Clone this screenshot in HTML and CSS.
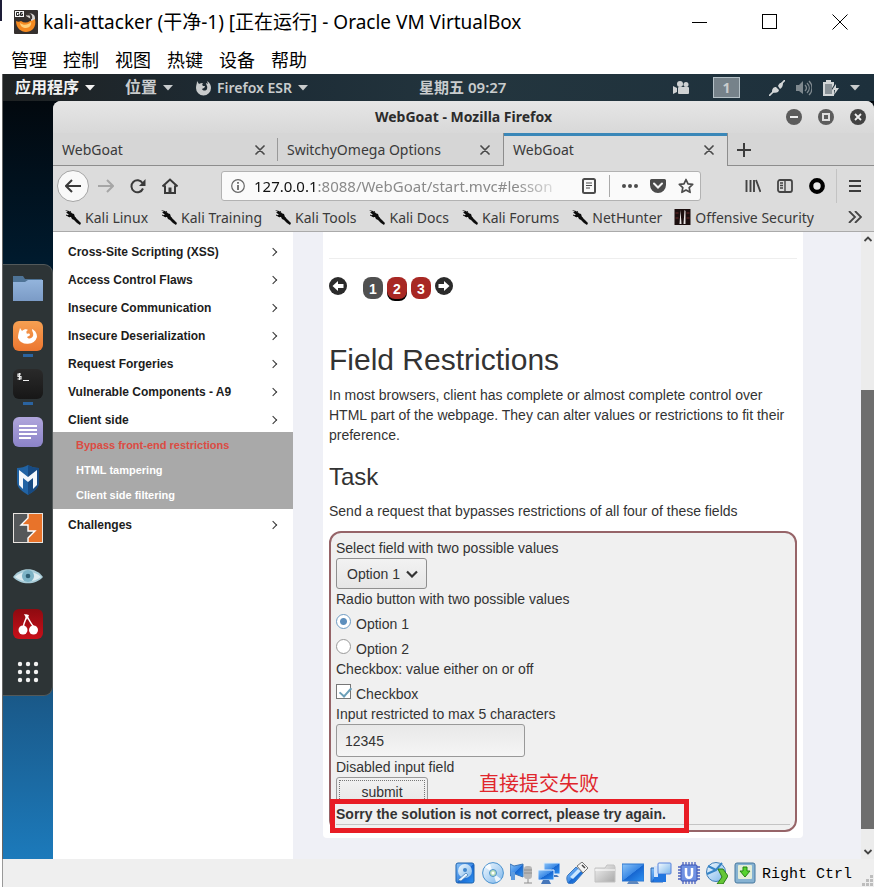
FILE: index.html
```html
<!DOCTYPE html>
<html lang="zh-CN">
<head>
<meta charset="utf-8">
<meta name="viewport" content="width=device-width, initial-scale=1">
<title>kali-attacker - Oracle VM VirtualBox</title>
<link rel="stylesheet" href="styles.css">
</head>
<body>
<svg class="defs" aria-hidden="true">
  <defs>
    <linearGradient id="gBlue" x1="0" y1="0" x2="1" y2="1"><stop offset="0" stop-color="#8cc4f8"/><stop offset=".5" stop-color="#3c8ae6"/><stop offset=".52" stop-color="#1766d0"/><stop offset="1" stop-color="#2f93f2"/></linearGradient>
    <linearGradient id="gPale" x1="0" y1="0" x2="1" y2="1"><stop offset="0" stop-color="#f4fbff"/><stop offset="1" stop-color="#7ab4ea"/></linearGradient>
    <linearGradient id="gGrey" x1="0" y1="0" x2="1" y2="1"><stop offset="0" stop-color="#f2f2f2"/><stop offset="1" stop-color="#a8a8a8"/></linearGradient>
    <linearGradient id="gFolder" x1="0" y1="0" x2="0" y2="1"><stop offset="0" stop-color="#93b4dc"/><stop offset="1" stop-color="#7b9bc6"/></linearGradient>
    <linearGradient id="gFox" x1="0" y1="0" x2="0" y2="1"><stop offset="0" stop-color="#f6a052"/><stop offset="1" stop-color="#ec7630"/></linearGradient>
    <linearGradient id="gTerm" x1="0" y1="0" x2="0" y2="1"><stop offset="0" stop-color="#2a2a2a"/><stop offset="1" stop-color="#171717"/></linearGradient>
    <linearGradient id="gNote" x1="0" y1="0" x2="0" y2="1"><stop offset="0" stop-color="#b0a6dc"/><stop offset="1" stop-color="#8b83c8"/></linearGradient>
    <linearGradient id="gCherry" x1="0" y1="0" x2="0" y2="1"><stop offset="0" stop-color="#8e0a10"/><stop offset="1" stop-color="#c8101a"/></linearGradient>
    <symbol id="dragon" viewBox="0 0 17 16"><path d="M1 1l4 1 2 2 3 1 1 3 3 3 3 3-1 2-3-2-3-3-2-1-1-2-2 0-2-2 2 0-3-3 2 0z" fill="#0c0c0c"/><path d="M3 3l3 3M2 6l4 2M6 2l2 4M10 9l2 0" stroke="#0c0c0c" fill="none"/></symbol>
    <symbol id="closeX" viewBox="0 0 10 10"><path d="M1 1l8 8M9 1l-8 8" fill="none" stroke="#4a4a4a" stroke-width="1.7" stroke-linecap="round"/></symbol>
    <symbol id="caret" viewBox="0 0 10 6"><path d="M0 0h10L5 5.500z" fill="currentColor"/></symbol>
  </defs>
</svg>

<header class="host-title">
  <svg class="app-icon" viewBox="0 0 24 24"><rect width="24" height="24" rx="1" fill="#35302e"/><path d="M12 6c2-4 9-3 9 2v7h-4V9z" fill="#d9d5d2"/><path d="M13 5c2-2 5 0 4 4" fill="none" stroke="#3d3734" stroke-width="2"/><path d="M2 11c2 1 3 1 5 0 3 2 6 2 9 0 2 0 3-1 5-2 2 9-4 13-9 13S2 18 2 11z" fill="#f58a20"/><path d="M6 13c4 3 8 2 11-1 1 3-2 6-5 6s-6-2-6-5z" fill="#ffd07a"/><rect x="1" y="1" width="9" height="6" fill="#f8f8f8"/><path d="M5 2.500H2.500v3H5V4H4M8.500 2.500H6.500v3h2V4h-2" fill="none" stroke="#222" stroke-width="1"/></svg>
  <h1>kali-attacker (干净-1) [正在运行] - Oracle VM VirtualBox</h1>
  <div class="host-buttons">
    <button aria-label="最小化"><svg viewBox="0 0 16 16"><path d="M0 8.500h15" stroke="#000"/></svg></button>
    <button aria-label="最大化"><svg viewBox="0 0 16 16"><rect x=".5" y=".5" width="14" height="14" fill="none" stroke="#000"/></svg></button>
    <button aria-label="关闭"><svg viewBox="0 0 16 16"><path d="M.5.5l15 15M15.500.5l-15 15" stroke="#000"/></svg></button>
  </div>
</header>
<nav class="host-menu">
  <button>管理</button><button>控制</button><button>视图</button><button>热键</button><button>设备</button><button>帮助</button>
</nav>

<div class="screen">
  <div class="topbar">
    <button class="top-item strong">应用程序<svg class="caret"><use href="#caret"/></svg></button>
    <button class="top-item">位置<svg class="caret"><use href="#caret"/></svg></button>
    <button class="top-item latin"><svg class="fox" viewBox="0 0 16 16"><path d="M2 1l2 3c1-1 3-1 4-1-1 1-1 2 0 3l2 0c0 2-2 2-3 3 1 2 4 2 5 0 1-3-1-4-1-6l2 1-1-3c3 2 4 4 4 7a7.500 7.500 0 0 1-15 0c0-3 1-4 1-7z" fill="#c9cccd"/></svg>Firefox ESR<svg class="caret"><use href="#caret"/></svg></button>
    <span class="grow-a"></span>
    <time class="clock">星期五 09:27</time>
    <span class="grow-b"></span>
    <svg class="camera" viewBox="0 0 17 14"><circle cx="7" cy="3" r="3" fill="#cfd2d3"/><circle cx="13" cy="3.500" r="2.500" fill="#cfd2d3"/><rect x="5" y="6" width="11" height="7" rx="1" fill="#cfd2d3"/><path d="M0 5l4 2v4l-4 2z" fill="#cfd2d3"/></svg>
    <span class="workspace">1</span>
    <div class="tray">
      <svg width="16" height="16" viewBox="0 0 16 16"><path d="M0 16l5-5M11 5l5-5" stroke="#d3d6d7" stroke-width="1.600"/><path d="M3 12c0-4 2-5 4-5l3 3c0 2-3 4-7 2zM9 6c1-3 3-4 5-3 0 3-1 5-3 6z" fill="#d3d6d7"/></svg>
      <svg width="16" height="16" viewBox="0 0 16 16"><path d="M0 5h3l4-4v13L3 11H0z" fill="#7f898f"/><path d="M9 5c2 2 2 4 0 6M11 3c3 3 3 7 0 10M13 1c4 4 4 10 0 14" fill="none" stroke="#7f898f" stroke-width="1.300"/></svg>
      <svg width="16" height="16" viewBox="0 0 16 16"><path d="M3 0h5v2h3v3L8 10h3v6H0V2h3z" fill="#d3d6d7"/><rect x="2" y="4" width="7" height="10" fill="#8a9297"/><path d="M13 4l-4 6h3l-1 5 5-7h-3z" fill="#d3d6d7"/></svg>
      <svg class="caret"><use href="#caret"/></svg>
    </div>
  </div>

  <div class="desktop">
    <aside class="dock-column">
      <div class="dock">
        <svg viewBox="0 0 30 30"><path d="M0 3h10l2 3h17v10H0z" fill="#4e7396"/><path d="M0 9h12l3-2h15v21H0z" fill="url(#gFolder)"/></svg>
        <span class="running"><svg viewBox="0 0 30 30"><rect width="30" height="30" rx="6" fill="url(#gFox)"/><path d="M7 7l2 3c2-2 5-2 6-1-2 1-2 2-1 4 2-1 3 0 3 1s-2 1-3 2c2 3 5 1 6-1 1-3-1-4-1-7 4 2 5 5 5 8a10 9 0 0 1-19 1c0-4 1-6 2-10z" fill="#fff"/></svg></span>
        <span class="running"><svg viewBox="0 0 30 30"><rect width="30" height="30" rx="6" fill="url(#gTerm)"/><path d="M8 5H5v2.500h3V10H4.500M6.500 4v7M10 11.500h6" fill="none" stroke="#eee" stroke-width="1.200"/></svg></span>
        <svg viewBox="0 0 30 30"><rect width="30" height="30" rx="6" fill="url(#gNote)"/><path d="M6 9h18M6 13h18M6 17h18M6 21h12" stroke="#fff" stroke-width="2"/></svg>
        <svg viewBox="0 0 30 30"><path d="M15 0c3 2 7 3 11 3v14c0 6-5 9-11 13C9 26 4 23 4 17V3c4 0 8-1 11-3z" fill="#2163a4"/><path d="M15 0v30c6-4 11-7 11-13V3c-4 0-8-1-11-3z" fill="#174a82"/><path d="M6 5l9 7 9-7v15l-4 4V13l-5 4-5-4v11l-4-4z" fill="#f3f7fb"/></svg>
        <svg viewBox="0 0 30 30"><rect x="1" y="1" width="28" height="28" fill="#55585a"/><path d="M15 1h14v28H15v-5l7-6h-7v-6H8l7-7z" fill="#e8732a"/><path d="M15 1v4l-7 7h7v6h7l-7 7v4" fill="none" stroke="#fff" stroke-width="1.400"/><rect x=".5" y=".5" width="29" height="29" fill="none" stroke="#e8e4e0"/></svg>
        <svg viewBox="0 0 32 30"><path d="M0 16C8 5 24 5 32 16 24 25 8 25 0 16z" fill="#a8ccd8"/><path d="M2 16C9 9 23 9 30 16 23 22 9 22 2 16z" fill="#dcebf0"/><circle cx="16" cy="15" r="6.500" fill="#7db3c6"/><circle cx="16" cy="15" r="2.500" fill="#2f5f74"/></svg>
        <svg viewBox="0 0 30 30"><rect width="30" height="30" rx="6" fill="url(#gCherry)"/><path d="M10 19c1-6 3-9 4-12 2 4 4 8 7 11" fill="none" stroke="#fff" stroke-width="1.500"/><path d="M11 5l5 1-2 5z" fill="#fff"/><circle cx="10" cy="21" r="4.500" fill="#fff"/><circle cx="20.500" cy="21" r="4.500" fill="#fff"/></svg>
        <svg viewBox="0 0 30 30" fill="#f2f2f2"><circle cx="7" cy="7" r="2.200"/><circle cx="15" cy="7" r="2.200"/><circle cx="23" cy="7" r="2.200"/><circle cx="7" cy="15" r="2.200"/><circle cx="15" cy="15" r="2.200"/><circle cx="23" cy="15" r="2.200"/><circle cx="7" cy="23" r="2.200"/><circle cx="15" cy="23" r="2.200"/><circle cx="23" cy="23" r="2.200"/></svg>
      </div>
    </aside>

    <section class="browser">
      <div class="win-title">
        <h2>WebGoat - Mozilla Firefox</h2>
        <div class="win-buttons">
          <button aria-label="Minimize"><svg viewBox="0 0 16 16"><circle cx="8" cy="8" r="8" fill="#5c5c5c"/><path d="M4 8h8" stroke="#eee" stroke-width="2"/></svg></button>
          <button aria-label="Maximize"><svg viewBox="0 0 16 16"><circle cx="8" cy="8" r="8" fill="#5c5c5c"/><rect x="5" y="5" width="6" height="6" fill="none" stroke="#ddd" stroke-width="2"/></svg></button>
          <button aria-label="Close"><svg viewBox="0 0 16 16"><circle cx="8" cy="8" r="8" fill="#424242"/><path d="M5 5l6 6M11 5l-6 6" stroke="#eee" stroke-width="1.800"/></svg></button>
        </div>
      </div>
      <div class="tabs">
        <div class="tab"><span>WebGoat</span><button aria-label="Close tab"><svg><use href="#closeX"/></svg></button></div>
        <div class="tab"><span>SwitchyOmega Options</span><button aria-label="Close tab"><svg><use href="#closeX"/></svg></button></div>
        <div class="tab active"><span>WebGoat</span><button aria-label="Close tab"><svg><use href="#closeX"/></svg></button></div>
        <button class="new-tab" aria-label="New tab"><svg viewBox="0 0 14 14"><path d="M7 0v14M0 7h14" stroke="#3c3c3c" stroke-width="2"/></svg></button>
      </div>
      <div class="navbar">
        <button class="nav-btn back" aria-label="Back"><svg viewBox="0 0 16 16"><path d="M16 8H1.500M7 2L1 8l6 6" fill="none" stroke="#3a3a3a" stroke-width="2"/></svg></button>
        <button class="nav-btn" aria-label="Forward"><svg viewBox="0 0 16 16"><path d="M0 8h14.500M9 2l6 6-6 6" fill="none" stroke="#a6a6a6" stroke-width="2"/></svg></button>
        <button class="nav-btn" aria-label="Reload"><svg viewBox="0 0 16 16"><path d="M13 10.500A6 6 0 1 1 12.500 5" fill="none" stroke="#3a3a3a" stroke-width="2"/><path d="M15.500 1v7H9z" fill="#3a3a3a"/></svg></button>
        <button class="nav-btn" aria-label="Home"><svg viewBox="0 0 16 16"><path d="M.5 8.500L8 1.500l7.500 7M3 7.500V15h10V7.500" fill="none" stroke="#3a3a3a" stroke-width="2"/><path d="M6.500 9.500h3V15h-3z" fill="#3a3a3a"/></svg></button>
        <div class="urlbar">
          <svg class="info" viewBox="0 0 14 14"><circle cx="7" cy="7" r="6.300" fill="none" stroke="#666" stroke-width="1.200"/><path d="M7 6v5M7 3v1.800" stroke="#555" stroke-width="1.600"/></svg>
          <span class="url">127.0.0.1<i>:8088/WebGoat/start.mvc#lesson</i></span>
          <svg class="reader" viewBox="0 0 14 16"><rect x="1" y="1" width="12" height="14" rx="1.500" fill="none" stroke="#4c4c4c" stroke-width="2"/><path d="M4 5h6M4 7.500h6M4 10h4" stroke="#4c4c4c" stroke-width="1.200"/></svg>
          <span class="url-sep"></span>
          <svg class="dots" viewBox="0 0 16 16" fill="#4c4c4c"><circle cx="2" cy="8" r="2"/><circle cx="8" cy="8" r="2"/><circle cx="14" cy="8" r="2"/></svg>
          <svg class="pocket" viewBox="0 0 16 16"><path d="M1.500 1h13A1.500 1.500 0 0 1 16 2.500V7A8 8 0 0 1 0 7V2.500A1.500 1.500 0 0 1 1.500 1z" fill="#4c4c4c"/><path d="M4 5.500l4 4 4-4" fill="none" stroke="#f6f6f6" stroke-width="2" stroke-linecap="round"/></svg>
          <svg class="star" viewBox="0 0 16 16"><path d="M8 1.500l2 4.300 4.700.6-3.500 3.200.9 4.700L8 12l-4.100 2.300.9-4.700L1.300 6.400 6 5.800z" fill="none" stroke="#4c4c4c" stroke-width="1.700" stroke-linejoin="round"/></svg>
        </div>
        <button class="nav-btn" aria-label="Library"><svg viewBox="0 0 16 16"><path d="M1.500 2v12M5.500 2v12M9 2v12M11 2l4.500 12" stroke="#444" stroke-width="1.900"/></svg></button>
        <button class="nav-btn" aria-label="Sidebar"><svg viewBox="0 0 16 16"><rect x="1" y="2" width="14" height="12" rx="2" fill="none" stroke="#444" stroke-width="1.800"/><path d="M8 2v12M3 5h3M3 7.500h3M3 10h3" stroke="#444" stroke-width="1.400"/></svg></button>
        <button class="nav-btn" aria-label="SwitchyOmega"><svg viewBox="0 0 16 16"><circle cx="8" cy="8" r="5.800" fill="#e8e8e8" stroke="#000" stroke-width="4.200"/></svg></button>
        <span class="nav-sep"></span>
        <button class="nav-btn" aria-label="Menu"><svg viewBox="0 0 16 16"><path d="M2 3h12M2 8h12M2 13h12" stroke="#3c3c3c" stroke-width="2"/></svg></button>
      </div>
      <div class="bookmarks">
        <a href="#"><svg><use href="#dragon"/></svg>Kali Linux</a>
        <a href="#"><svg><use href="#dragon"/></svg>Kali Training</a>
        <a href="#"><svg><use href="#dragon"/></svg>Kali Tools</a>
        <a href="#"><svg><use href="#dragon"/></svg>Kali Docs</a>
        <a href="#"><svg><use href="#dragon"/></svg>Kali Forums</a>
        <a href="#"><svg><use href="#dragon"/></svg>NetHunter</a>
        <a href="#"><svg viewBox="0 0 16 16"><rect width="16" height="16" fill="#1c0f0f"/><path d="M6 1l1 14H5zM10 1l1 1v13H9z" fill="#e8e4e4"/><path d="M1 4h3M1 9h3M12 4h3M12 9h3" stroke="#6b2b2b"/></svg>Offensive Security</a>
        <button aria-label="More bookmarks"><svg viewBox="0 0 14 12"><path d="M1 0l6 6-6 6M7 0l6 6-6 6" fill="none" stroke="#444" stroke-width="1.800"/></svg></button>
      </div>

      <div class="page">
        <nav class="lessons">
          <ul>
            <li><a href="#">Cross-Site Scripting (XSS)</a></li>
            <li><a href="#">Access Control Flaws</a></li>
            <li><a href="#">Insecure Communication</a></li>
            <li><a href="#">Insecure Deserialization</a></li>
            <li><a href="#">Request Forgeries</a></li>
            <li><a href="#">Vulnerable Components - A9</a></li>
            <li><a href="#">Client side</a>
              <ul class="sub">
                <li class="current"><a href="#">Bypass front-end restrictions</a></li>
                <li><a href="#">HTML tampering</a></li>
                <li><a href="#">Client side filtering</a></li>
              </ul>
            </li>
            <li><a href="#">Challenges</a></li>
          </ul>
        </nav>
        <main>
          <article class="card">
            <hr class="rule">
            <div class="pager">
              <a href="#" class="arrow prev" aria-label="Previous"><svg viewBox="0 0 18 18"><circle cx="9" cy="9" r="9" fill="#2b2b2b"/><path d="M3.500 9L9 4v3h5.500v4H9v3z" fill="#fff"/></svg></a>
              <a href="#" class="num seen">1</a>
              <a href="#" class="num here">2</a>
              <a href="#" class="num">3</a>
              <a href="#" class="arrow" aria-label="Next"><svg viewBox="0 0 18 18"><circle cx="9" cy="9" r="9" fill="#2b2b2b"/><path d="M14.500 9L9 4v3H3.500v4H9v3z" fill="#fff"/></svg></a>
            </div>
            <h2>Field Restrictions</h2>
            <p>In most browsers, client has complete or almost complete control over HTML part of the webpage. They can alter values or restrictions to fit their preference.</p>
            <h3>Task</h3>
            <p>Send a request that bypasses restrictions of all four of these fields</p>
            <form class="attack" onsubmit="return false">
              <label class="line" for="sel">Select field with two possible values</label>
              <div class="select-wrap"><select id="sel"><option>Option 1</option><option>Option 2</option></select><svg viewBox="0 0 12 8"><path d="M1 1.500l5 5 5-5" fill="none" stroke="#333" stroke-width="2.200"/></svg></div>
              <div class="line">Radio button with two possible values</div>
              <label class="choice"><input type="radio" name="radio" checked><span>Option 1</span></label>
              <label class="choice"><input type="radio" name="radio"><span>Option 2</span></label>
              <div class="line">Checkbox: value either on or off</div>
              <label class="choice"><input type="checkbox" checked><span>Checkbox</span></label>
              <label class="line" for="short">Input restricted to max 5 characters</label>
              <input class="text" id="short" type="text" maxlength="5" value="12345">
              <div class="line">Disabled input field</div>
              <div class="submit-clip"><button class="submit"><span>submit</span></button></div>
              <div class="feedback">Sorry the solution is not correct, please try again.
                <span class="mark"></span>
                <span class="note">直接提交失败</span>
              </div>
            </form>
          </article>
        </main>
        <div class="scrollbar">
          <svg viewBox="0 0 10 6"><path d="M1.500 5l3.500-3.500L8.500 5" fill="none" stroke="#444" stroke-width="1.800"/></svg>
          <span class="thumb"></span>
          <svg viewBox="0 0 10 6"><path d="M1.500 1L5 4.500 8.500 1" fill="none" stroke="#444" stroke-width="1.800"/></svg>
        </div>
      </div>
    </section>
  </div>
</div>

<footer class="status">
  <svg viewBox="0 0 22 22"><rect x="2" y="1" width="18" height="20" rx="2" fill="url(#gBlue)" stroke="#1d62ae"/><circle cx="11" cy="9" r="7" fill="url(#gPale)"/><circle cx="11" cy="8" r="2" fill="#3f86cc"/><path d="M4 18l8-7 2 2-7 6z" fill="#e8f4ff" stroke="#4680b8" stroke-width=".8"/></svg>
  <svg viewBox="0 0 22 22"><circle cx="11" cy="11" r="10.400" fill="url(#gPale)" stroke="#4a92cf"/><path d="M11 11L3 5a10 10 0 0 1 5-3zM11 11l8 6a10 10 0 0 1-5 3z" fill="#fff" opacity=".8"/><circle cx="11" cy="11" r="3.500" fill="#b7dcb8" stroke="#4a92cf"/><circle cx="11" cy="11" r="1.500" fill="#fff"/></svg>
  <svg viewBox="0 0 22 22"><path d="M0 2l4 2 9-2v13l-8-3-5 2z" fill="url(#gBlue)" stroke="#3b74b6"/><path d="M1 10h4v8H1z" fill="#5d9be0"/><rect x="14" y="4" width="8" height="13" rx="3" fill="#b7b7b7"/><path d="M14 8h8M14 11h8M18 17v4M14 21h8" stroke="#8e8e8e"/></svg>
  <svg viewBox="0 0 22 22"><path d="M6 1h16v11H6z" fill="url(#gBlue)" stroke="#dcebfb"/><path d="M0 8h16v10H0z" fill="url(#gBlue)" stroke="#e6f2ff"/><path d="M5 18h6l2 4H3z" fill="#4677ba"/><path d="M16 13h3l2 2h-5z" fill="#4677ba"/></svg>
  <svg viewBox="0 0 22 22"><path d="M2 13L10 5l7 6-8 9c-2 2-5 2-7 1-1-2-2-6 0-8z" fill="url(#gBlue)" stroke="#3b78c0"/><path d="M4 15l8-8 3 2-8 8z" fill="#c9e6ff"/><path d="M11 4l5-4 6 6-5 5z" fill="#f3f3f3" stroke="#777"/><path d="M16 3l3 3" stroke="#444" stroke-width="1.500"/></svg>
  <svg viewBox="0 0 22 22"><path d="M1 6h10l2-3h7l1 2v15H1z" fill="url(#gGrey)" stroke="#c2c2c2"/><path d="M1 8h20" stroke="#fff"/></svg>
  <svg viewBox="0 0 22 22"><rect x="0" y="2" width="22" height="17" fill="url(#gBlue)" stroke="#2c77cf"/><path d="M7 19h8l2 3H5z" fill="#5d87bf"/></svg>
  <svg viewBox="0 0 22 22"><path d="M1 6h12v14H1z" fill="url(#gBlue)" stroke="#2c68b6"/><path d="M4 4h4v12H4z" fill="#d4e5fa"/><rect x="8" y="1" width="13" height="11" rx="1" fill="url(#gPale)" stroke="#5a84dc"/><path d="M8 12h8v8H4v-5h4z" fill="#2276df"/></svg>
  <svg viewBox="0 0 22 22"><path d="M5 0v22M8 0v22M11 0v22M14 0v22M17 0v22M0 5h22M0 8h22M0 11h22M0 14h22M0 17h22" stroke="#4b62bf" stroke-width="1.300"/><rect x="3" y="3" width="16" height="16" rx="1" fill="#6f91e2" stroke="#3a54b4"/><path d="M8 6v6c0 5 6 5 6 0V6" fill="none" stroke="#fff" stroke-width="2.500"/></svg>
  <svg viewBox="0 0 22 22"><circle cx="10" cy="10" r="9.500" fill="url(#gPale)" stroke="#3c7db8"/><path d="M2 4l8 4 6-7M1 12l9-4" stroke="#3684c6" stroke-width="2" fill="none"/><path d="M12 7h5l5 7-5 8h-6l5-7z" fill="#65c636" stroke="#2b7a19"/></svg>
  <svg viewBox="0 0 22 22"><rect x="1" y="1" width="20" height="20" rx="2" fill="#86b2d2" stroke="#47799e"/><rect x="4" y="3" width="14" height="14" rx="1" fill="#e3edda"/><path d="M9 5h4v4h3l-5 6-5-6h3z" fill="#55d32d" stroke="#238212"/></svg>
  <span>Right Ctrl</span>
  <svg class="grip" viewBox="0 0 12 12" fill="#bdbdbd"><path d="M8 0h3v3H8zM4 4h3v3H4zM8 4h3v3H8zM0 8h3v3H0zM4 8h3v3H4zM8 8h3v3H8z"/></svg>
</footer>
</body>
</html>
```
FILE: styles.css
```css
* { box-sizing: border-box; }

body {
  margin: 0;
  min-height: 100vh;
  display: flex;
  flex-direction: column;
  padding-left: 3px;
  background: #fff;
  color: #000;
  font-family: "Noto Sans", "Noto Sans CJK SC", sans-serif;
  overflow-x: hidden;
}
body::before {
  content: "";
  position: absolute;
  left: 0;
  top: 0;
  width: 2px;
  height: 21px;
  background: #1d1d38;
}

button {
  margin: 0;
  padding: 0;
  border: 0;
  background: none;
  font: inherit;
  color: inherit;
}
svg { display: block; flex: none; }
a { color: inherit; text-decoration: none; }
h1, h2, h3, p, ul { margin: 0; padding: 0; }
.defs { position: absolute; width: 0; height: 0; }

/* Host window */
.host-title {
  display: flex;
  align-items: center;
  height: 43px;
  padding: 0 26px 0 11px;
}
.app-icon { width: 24px; height: 24px; margin-right: 5px; }
.host-title h1 {
  font-size: 19px;
  line-height: 24px;
  font-weight: 400;
  white-space: nowrap;
}
.host-buttons { display: flex; gap: 54px; margin-left: auto; }
.host-buttons svg { width: 16px; height: 16px; }
.host-menu {
  display: flex;
  gap: 16px;
  height: 31px;
  padding-left: 8px;
  font: 18px/30px "Noto Sans CJK SC", sans-serif;
}

/* Guest screen */
.screen {
  flex: 1;
  display: flex;
  flex-direction: column;
  margin-left: -1px;
  border-left: 1px solid #666;
}
.topbar {
  display: flex;
  align-items: center;
  height: 27px;
  padding: 0 14px 0 12px;
  background: linear-gradient(90deg, #1f2223, #1d2c36 30%, #23353e 55%, #1d303c);
  color: #c9cccd;
  font: 700 16px/27px "Noto Sans", "Noto Sans CJK SC", sans-serif;
}
.top-item { display: flex; align-items: center; gap: 6px; margin-right: 30px; }
.top-item.strong { color: #f2f2f2; }
.top-item.latin { margin-left: -8px; margin-right: 0; font-size: 14px; font-weight: 600; }
.clock { font-size: 15px; font-weight: 600; white-space: nowrap; }
.caret { width: 10px; height: 6px; }
.fox { width: 16px; height: 16px; }
.grow-a { flex: 2; }
.grow-b { flex: 3; }
.camera { width: 17px; height: 14px; }
.workspace {
  width: 27px;
  height: 21px;
  margin: 0 29px 0 23px;
  border: 1px solid #b4c0c6;
  background: #76828a;
  font-size: 14px;
  line-height: 19px;
  text-align: center;
}
.tray { display: flex; align-items: center; gap: 11px; }

.desktop {
  flex: 1;
  display: flex;
  background: linear-gradient(180deg, #02080e, #001a2d 21%, #08283f 50%, #1a5b8c 80%, #1c7abb);
}
.dock-column {
  width: 50px;
  flex: none;
  display: flex;
  flex-direction: column;
  justify-content: center;
}
.dock {
  display: flex;
  flex-direction: column;
  align-items: center;
  gap: 18px;
  padding: 8px 0;
  border: 1px solid #53595a;
  border-left: 0;
  border-radius: 0 9px 9px 0;
  background: #2d3436;
}
.dock svg { width: 30px; height: 30px; }
.running { position: relative; }
.running::after {
  content: "";
  position: absolute;
  left: 10px;
  top: 33px;
  width: 10px;
  height: 3px;
  background: #2a63a0;
}

/* Browser chrome */
.browser {
  flex: 1;
  min-width: 0;
  display: flex;
  flex-direction: column;
  border-radius: 8px 8px 0 0;
  overflow: hidden;
  background: #dcdcdc;
  color: #3a3a3a;
  font-size: 15px;
}
.win-title {
  position: relative;
  height: 32px;
  background: linear-gradient(180deg, #e6e6e6, #d8d8d8);
}
.win-title h2 {
  font-size: 14px;
  line-height: 32px;
  font-weight: 700;
  text-align: center;
  color: #2c2c2c;
}
.win-buttons {
  position: absolute;
  right: 8px;
  top: 8px;
  display: flex;
  gap: 16px;
}
.win-buttons svg { width: 16px; height: 16px; }

.tabs {
  display: flex;
  height: 33px;
  background: #d6d6d6;
  box-shadow: inset 0 -1px #8d8d8d;
}
.tab {
  flex: 0 1 225px;
  display: flex;
  align-items: center;
  justify-content: space-between;
  padding: 0 13px 0 9px;
  line-height: 32px;
  font-size: 14px;
  background: linear-gradient(#999, #999) right 5px / 1px 23px no-repeat;
}
.tab:nth-child(2) { background: none; }
.tab.active {
  background: #dcdcdc;
  border: solid #8d8d8d;
  border-width: 0 1px;
  box-shadow: inset 0 3px #3a87b8;
}
.tab svg { width: 10px; height: 10px; }
.new-tab { padding: 0 9px; }
.new-tab svg { width: 14px; height: 14px; }

.navbar { display: flex; align-items: center; height: 39px; padding: 0 3px 0 4px; }
.nav-btn {
  width: 32px;
  height: 32px;
  flex: none;
  display: flex;
  align-items: center;
  justify-content: center;
}
.nav-btn svg { width: 16px; height: 16px; }
.nav-btn.back { border: 1px solid #a4a4a4; border-radius: 50%; background: #f9f9f9; margin-right: 1px; }
.nav-sep { width: 1px; height: 34px; margin: 0 2px 0 3px; background: #c3c3c3; }
.urlbar {
  flex: 1;
  min-width: 0;
  display: flex;
  align-items: center;
  height: 30px;
  margin: 0 36px 0 35px;
  padding: 0 6px 0 9px;
  border: 1px solid #b2b2b2;
  border-radius: 3px;
  background: #fafafa;
}
.info { width: 14px; height: 14px; margin-right: 9px; }
.url {
  flex: 1;
  white-space: nowrap;
  font-size: 15px;
  line-height: 28px;
  color: #111;
  mask-image: linear-gradient(90deg, #000 84%, transparent);
}
.url i { font-style: normal; color: #8a8a8a; }
.reader { width: 14px; height: 16px; margin-left: 16px; }
.url-sep { width: 1px; height: 22px; margin: 0 12px 0 13px; background: #aaa; }
.dots, .pocket, .star { width: 16px; height: 16px; }
.dots, .pocket { margin-right: 12px; }

.bookmarks {
  display: flex;
  align-items: center;
  gap: 12px;
  height: 27px;
  padding: 0 12px 2px 11px;
  border-bottom: 1px solid #aaa;
  font-size: 14px;
  white-space: nowrap;
}
.bookmarks a { display: flex; align-items: center; gap: 4px; }
.bookmarks a svg { width: 17px; height: 16px; }
.bookmarks button { margin-left: auto; }
.bookmarks button svg { width: 14px; height: 12px; }

/* WebGoat page */
.page {
  flex: 1;
  display: flex;
  background: #eff0f6;
  color: #333;
  font: 14px/20px "Liberation Sans", sans-serif;
}
.lessons { width: 240px; flex: none; padding-top: 8px; background: #fff; }
.lessons ul { list-style: none; }
.lessons > ul { display: flex; flex-direction: column; gap: 4px; }
.lessons a {
  display: flex;
  align-items: center;
  justify-content: space-between;
  padding: 0 17px 0 15px;
  font-size: 12px;
  line-height: 24px;
  font-weight: 700;
  color: #1c1c1c;
}
.lessons > ul > li > a::after {
  content: "";
  width: 5px;
  height: 5px;
  border: solid #333;
  border-width: 1px 1px 0 0;
  transform: rotate(45deg);
}
.lessons .sub { padding: 1px 0; background: #a9a9a9; }
.lessons .sub a { padding-left: 23px; font-size: 11px; line-height: 25px; color: #fff; }
.lessons .sub .current a { color: #dc4b42; }

main { flex: 1; min-width: 0; padding: 0 58px 21px 30px; }
.card { height: 100%; padding: 26px 6px 0; background: #fff; border-radius: 0 0 4px 4px; }
.rule { height: 1px; margin: 0 0 18px; border: 0; background: #eee; }
.pager { display: flex; gap: 4px; height: 24px; }
.arrow svg { width: 18px; height: 18px; }
.prev { margin-right: 12px; }
.num {
  width: 20px;
  height: 22px;
  border-radius: 8px;
  background: #a82824;
  color: #fff;
  font-weight: 700;
  line-height: 24px;
  text-align: center;
}
.num.seen { background: #505050; }
.num.here { box-shadow: 0 2px #000; }
.card h2 { margin: 42px 0 9px; font-size: 30px; line-height: 33px; font-weight: 400; }
.card h3 { margin: 19px 0 11px; font-size: 24px; line-height: 26px; font-weight: 400; }

.attack {
  margin-top: 10px;
  padding: 5px;
  border: 2px solid #966468;
  border-radius: 12px;
  background: #f0f0f0;
}
.line { display: block; line-height: 20px; }
.select-wrap { position: relative; width: 91px; height: 31px; }
.select-wrap svg { position: absolute; right: 9px; top: 12px; width: 12px; height: 8px; pointer-events: none; }
.attack select {
  appearance: none;
  width: 100%;
  height: 31px;
  padding: 0 10px;
  border: 1px solid #8f8f8f;
  border-radius: 3px;
  background: linear-gradient(#f2f2f2, #e6e6e6);
  color: #333;
  font: inherit;
}
.choice { display: flex; align-items: center; gap: 5px; height: 25px; }
.choice span { padding-top: 4px; }
.choice input {
  appearance: none;
  width: 15px;
  height: 15px;
  margin: 0;
  border: 1px solid #999;
  background: #fff;
}
.choice [type="radio"] { border-radius: 50%; }
.choice [type="radio"]:checked {
  border-color: #6f9cc4;
  background: radial-gradient(circle, #5e8fbd 3px, #fff 4px);
}
.choice [type="checkbox"] { position: relative; border-color: #777; }
.choice [type="checkbox"]:checked::after {
  content: "";
  position: absolute;
  left: 5px;
  top: 0;
  width: 5px;
  height: 10px;
  border: solid #6a9fb8;
  border-width: 0 2px 2px 0;
  transform: rotate(42deg);
}
.text {
  display: block;
  width: 189px;
  height: 33px;
  padding: 0 8px;
  border: 1px solid #999;
  border-radius: 3px;
  background: linear-gradient(#e8e8e8, #f5f5f5);
  color: #333;
  font: inherit;
}
.submit-clip { height: 26px; overflow: hidden; }
.submit {
  display: block;
  width: 92px;
  height: 31px;
  padding: 2px;
  border: 1px solid #999;
  border-radius: 3px;
  background: linear-gradient(#f2f2f2, #e6e6e6);
}
.submit span { display: block; height: 100%; border: 1px dotted #777; line-height: 23px; }
.feedback {
  position: relative;
  height: 22px;
  border-bottom: 1px solid #c4c4c4;
  font-weight: 700;
  line-height: 22px;
  white-space: nowrap;
}
.mark {
  position: absolute;
  left: -6px;
  top: -4px;
  width: 359px;
  height: 34px;
  border: 5px solid #e81c24;
}
.note {
  position: absolute;
  left: 143px;
  top: -35px;
  color: #e0262c;
  font: 20px/30px "Noto Sans CJK SC", sans-serif;
}

.scrollbar {
  width: 13px;
  flex: none;
  display: flex;
  flex-direction: column;
  align-items: center;
  padding: 4px 0;
  background: #ececec;
}
.scrollbar svg { width: 10px; height: 6px; }
.thumb { width: 100%; flex: 1; margin: 148px 0 20px; background: #6e6e6e; }

/* Host status bar */
.status {
  display: flex;
  align-items: center;
  justify-content: flex-end;
  gap: 6px;
  height: 28px;
  margin-left: -1px;
  border-left: 1px solid #999;
  background: #efefef;
  font: 15px/28px "Liberation Mono", monospace;
}
.status svg { width: 22px; height: 22px; }
.status span { padding-top: 4px; }
.status .grip { width: 12px; height: 12px; align-self: flex-end; margin-left: 4px; }
```
